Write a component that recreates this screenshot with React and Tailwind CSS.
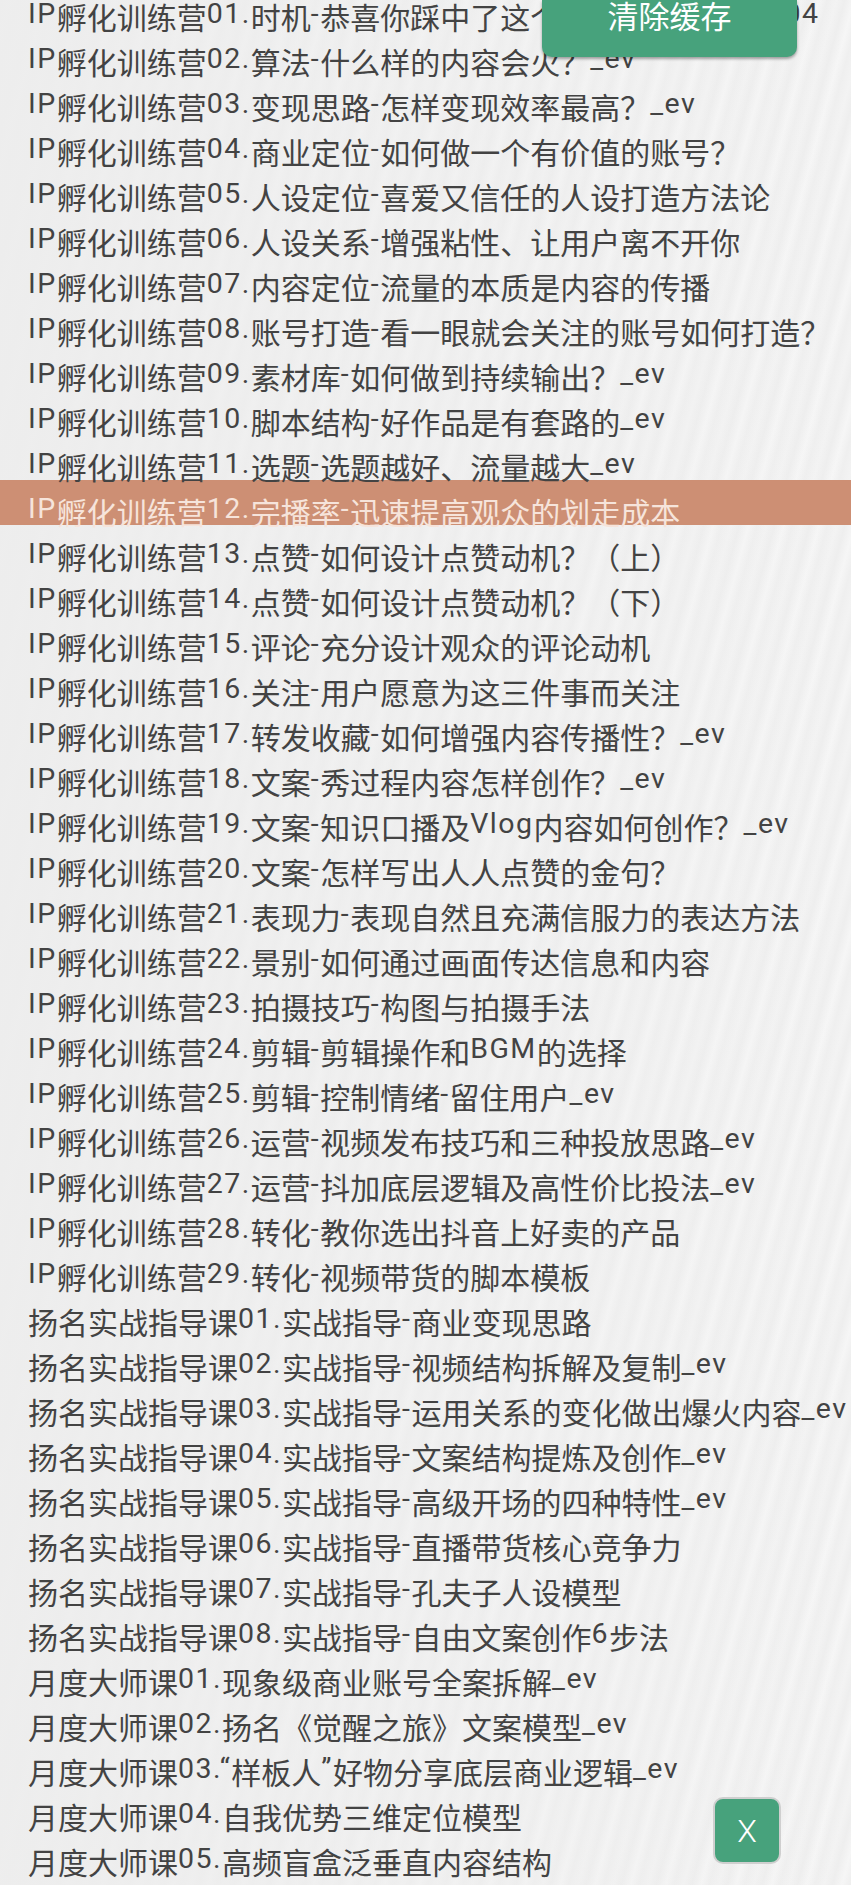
import React from 'react';

const ipRows = [
  '时机-恭喜你踩中了这个风口期的大红利_04',
  '算法-什么样的内容会火？_ev',
  '变现思路-怎样变现效率最高？_ev',
  '商业定位-如何做一个有价值的账号？',
  '人设定位-喜爱又信任的人设打造方法论',
  '人设关系-增强粘性、让用户离不开你',
  '内容定位-流量的本质是内容的传播',
  '账号打造-看一眼就会关注的账号如何打造？',
  '素材库-如何做到持续输出？_ev',
  '脚本结构-好作品是有套路的_ev',
  '选题-选题越好、流量越大_ev',
  '完播率-迅速提高观众的划走成本',
  '点赞-如何设计点赞动机？（上）',
  '点赞-如何设计点赞动机？（下）',
  '评论-充分设计观众的评论动机',
  '关注-用户愿意为这三件事而关注',
  '转发收藏-如何增强内容传播性？_ev',
  '文案-秀过程内容怎样创作？_ev',
  '文案-知识口播及Vlog内容如何创作？_ev',
  '文案-怎样写出人人点赞的金句？',
  '表现力-表现自然且充满信服力的表达方法',
  '景别-如何通过画面传达信息和内容',
  '拍摄技巧-构图与拍摄手法',
  '剪辑-剪辑操作和BGM的选择',
  '剪辑-控制情绪-留住用户_ev',
  '运营-视频发布技巧和三种投放思路_ev',
  '运营-抖加底层逻辑及高性价比投法_ev',
  '转化-教你选出抖音上好卖的产品',
  '转化-视频带货的脚本模板',
];

const yangRows = [
  '实战指导-商业变现思路',
  '实战指导-视频结构拆解及复制_ev',
  '实战指导-运用关系的变化做出爆火内容_ev',
  '实战指导-文案结构提炼及创作_ev',
  '实战指导-高级开场的四种特性_ev',
  '实战指导-直播带货核心竞争力',
  '实战指导-孔夫子人设模型',
  '实战指导-自由文案创作6步法',
];

const masterRows = [
  '现象级商业账号全案拆解_ev',
  '扬名《觉醒之旅》文案模型_ev',
  '“样板人”好物分享底层商业逻辑_ev',
  '自我优势三维定位模型',
  '高频盲盒泛垂直内容结构',
];

const pad = (n) => (n < 10 ? '0' + n : '' + n);

const lessons = [
  ...ipRows.map((t, i) => `IP孵化训练营${pad(i + 1)}.${t}`),
  ...yangRows.map((t, i) => `扬名实战指导课${pad(i + 1)}.${t}`),
  ...masterRows.map((t, i) => `月度大师课${pad(i + 1)}.${t}`),
];

const LATIN = /^[\x20-\x7E“”]+$/;

// latin runs sit higher than the CJK glyphs, like the phone font does
function Title({ text }) {
  const parts = text.split(/([\x20-\x7E“”]+)/).filter(Boolean);
  return parts.map((p, i) =>
    LATIN.test(p) ? (
      <span key={i} className="align-[6px] text-[28.5px] tracking-[1.5px]">
        {p}
      </span>
    ) : (
      <span key={i}>{p}</span>
    )
  );
}

export default function App() {
  const current = 11;

  return (
    <div className="relative h-[1885px] w-[851px] overflow-hidden bg-[#ededed] bg-[linear-gradient(90deg,rgba(237,237,237,0.95)_0%,rgba(237,237,237,0.5)_50%,rgba(237,237,237,0)_100%),repeating-linear-gradient(105deg,#eeeeee_0px,#f6f6f6_9px,#efefef_17px,#f3f3f3_26px,#eeeeee_34px)] font-[Roboto,'Noto_Sans_CJK_SC',sans-serif] text-[#434343]">
      <ul className="-mt-[15px]">
        {lessons.map((t, i) => (
          <li
            key={i}
            className={`h-[45px] whitespace-nowrap pl-[28px] pt-[6px] text-[30px] leading-[45px] ${
              i === current ? 'bg-[#cd8f74] text-[#f6e4db]' : ''
            }`}
          >
            <Title text={t} />
          </li>
        ))}
      </ul>

      <button className="absolute left-[542px] top-0 flex h-[57px] w-[255px] justify-center rounded-b-[10px] bg-[#47a27c] text-[31px] leading-[36px] text-white shadow-[0_2px_3px_rgba(0,0,0,0.35)]">
        清除缓存
      </button>

      <button className="absolute left-[713px] top-[1797px] flex h-[67px] w-[68px] items-center justify-center rounded-[10px] border-2 border-[#cfcfcf] bg-[#47a27c] text-[32px] font-light text-white">
        X
      </button>
    </div>
  );
}
